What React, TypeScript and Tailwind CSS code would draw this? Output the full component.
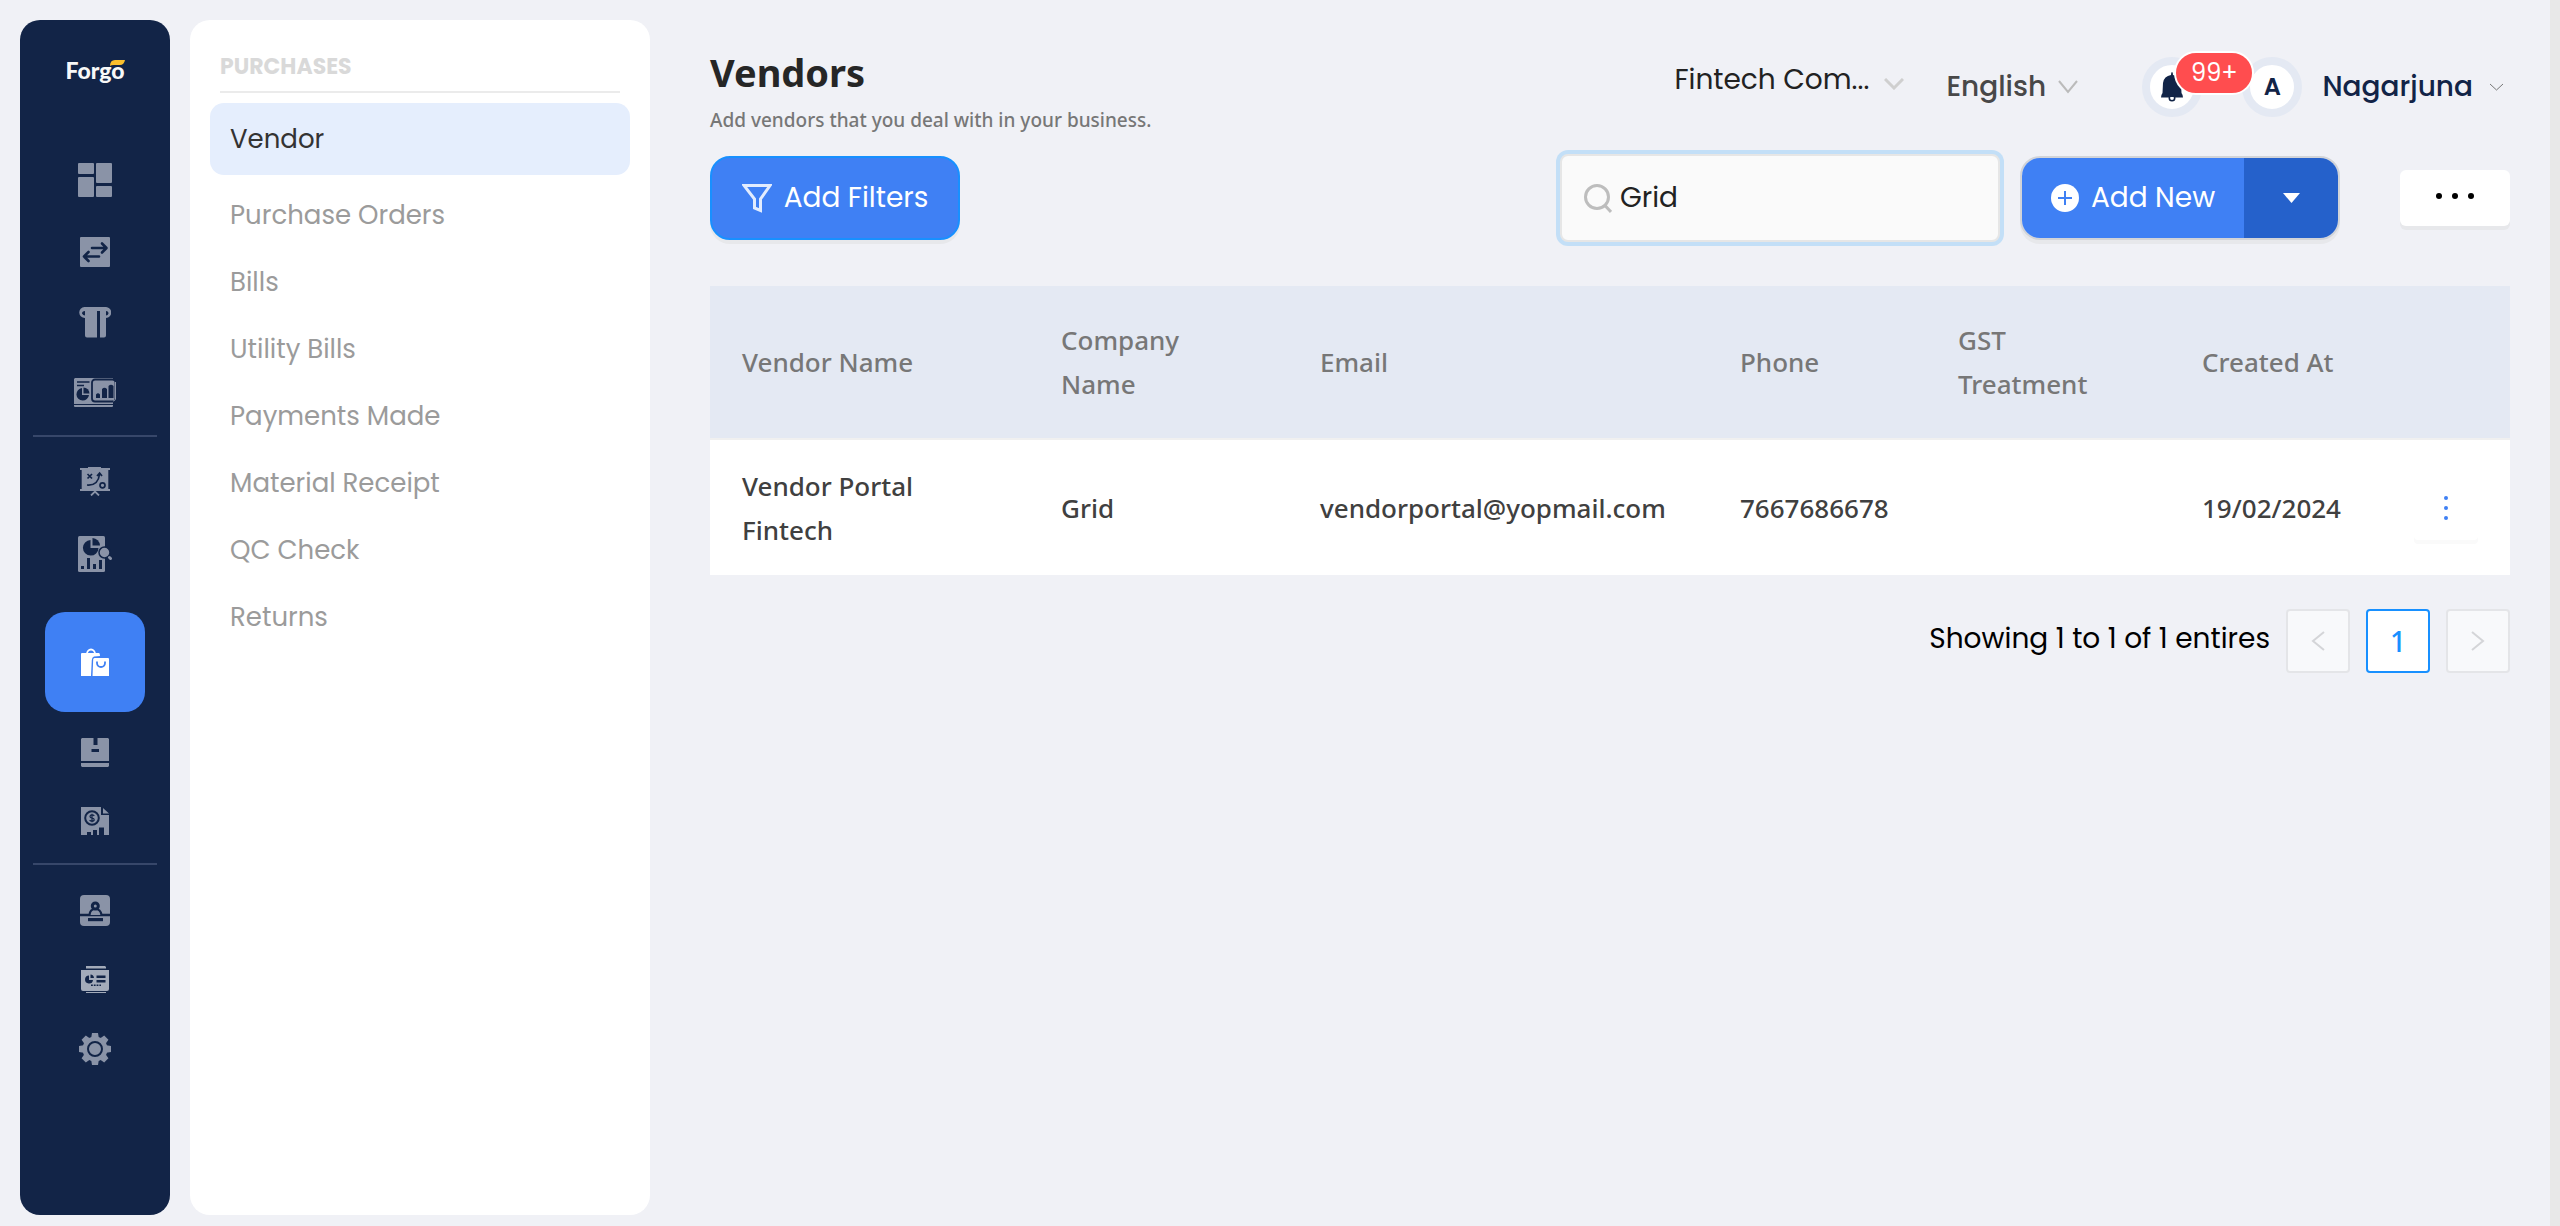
import type { ReactNode } from "react";

const NAVY = "#122447";

const icons = {
  dashboard: (
    <svg width="34" height="34" viewBox="0 0 34 34" fill="currentColor">
      <rect width="16" height="11" rx="1" />
      <rect y="14" width="16" height="20" rx="1" />
      <rect x="18" width="16" height="20" rx="1" />
      <rect x="18" y="23" width="16" height="11" rx="1" />
    </svg>
  ),
  transfer: (
    <svg width="30" height="30" viewBox="0 0 30 30">
      <rect width="30" height="30" rx="1" fill="currentColor" />
      <g fill="none" stroke={NAVY} strokeWidth="2.6" strokeLinecap="round" strokeLinejoin="round">
        <path d="M12 11H26M22 6.500l4.500 4.500-4.500 4.500" />
        <path d="M19 19.500H4M8.500 15L4 19.500 8.500 24" />
      </g>
    </svg>
  ),
  receipt: (
    <svg width="32" height="31" viewBox="0 0 32 31">
      <path
        d="M5.500 0H26.500A5.500 5.500 0 0 1 27 11V28.500Q27 30.500 25 30.500H8Q6 30.500 6 28.500V11A5.500 5.500 0 0 1 5.500 0Z"
        fill="currentColor"
      />
      <path d="M18 4h3v27h-3z" fill={NAVY} />
      <path d="M6 4Q3 4 3 6.500 4 8.500 6 8.500ZM27 4Q29.500 4 29.500 6.500 29 8.500 27 8.500Z" fill={NAVY} />
    </svg>
  ),
  analytics: (
    <svg width="42" height="29" viewBox="0 0 42 29">
      <path d="M1 0H39V26H0V1ZM0 27H39V28Q39 29 38 29H1Q0 29 0 28Z" fill="currentColor" />
      <path d="M3 4H15.500M3 7.500H10" stroke={NAVY} strokeWidth="1.400" />
      <path d="M8 10A6.300 6.300 0 1 0 15 17H8Z" fill={NAVY} />
      <path d="M9.500 9.500A6 6 0 0 1 15.500 15.500H9.500Z" fill={NAVY} />
      <rect x="18" y="1.500" width="23.500" height="22" rx="3" fill="currentColor" stroke={NAVY} strokeWidth="1.800" />
      <path d="M41.500 4V21Q41 23 39 23" stroke="currentColor" strokeWidth="1" fill="none" />
      <path
        d="M22 20V16.500Q24 14 26 16.500V20ZM28 20V11Q30.500 8.500 33 11V20ZM34.500 20V8Q37 5.500 39.500 8V20Z"
        fill={NAVY}
      />
    </svg>
  ),
  strategy: (
    <svg width="30" height="29" viewBox="0 0 30 29">
      <path d="M0 1H8V0H21V1H30V3H29V22H30V24H0V22H1V3H0Z" fill="currentColor" />
      <path d="M15 23V26M11 28.500l4-4 4 4" stroke="currentColor" strokeWidth="1.800" fill="none" />
      <g fill="none" stroke={NAVY} strokeWidth="1.700">
        <path d="M7.500 7l4.500 4.500M12 7l-4.500 4.500M7 18Q18 19 19.500 7.500M17 9l2.600-3L22 9" />
        <circle cx="22.500" cy="18.300" r="2.500" />
        <path d="M1.500 3V22M28.500 3V22" strokeWidth=".7" />
      </g>
    </svg>
  ),
  report: (
    <svg width="34" height="36" viewBox="0 0 34 36">
      <rect width="27" height="36" rx="1.500" fill="currentColor" />
      <g fill={NAVY}>
        <path d="M12.500 4A7.800 7.800 0 1 0 20.500 12H12.500Z" />
        <path d="M14.500 2A8 8 0 0 1 22 9.500H14.500Z" />
        <path d="M3 30h3v3H3zM9 22h3v11H9zM15 28h3v5h-3zM21 24h3v9h-3z" />
      </g>
      <circle cx="26.500" cy="16.500" r="5.500" fill="currentColor" stroke={NAVY} strokeWidth="1.500" />
      <path d="M31.500 21.500l1 1" stroke="currentColor" strokeWidth="3" strokeLinecap="round" />
    </svg>
  ),
  purchases: (
    <svg width="28" height="28" viewBox="0 0 28 28">
      <path d="M6 6A4 4.500 0 0 1 14 6" fill="none" stroke="currentColor" strokeWidth="1.800" />
      <path d="M1 5H18Q19 5 19 8L13 8.500Q11 9 10.800 12L10 28H0V6Q0 5 1 5Z" fill="currentColor" />
      <path d="M13.500 10H27Q28 10 28 11V28H11.500L12.200 11.500Q12.300 10 13.500 10Z" fill="currentColor" />
      <path d="M16 13.500V15A4 4 0 0 0 24 15V13.500" fill="none" stroke="#3f80f4" strokeWidth="1.800" />
    </svg>
  ),
  inventory: (
    <svg width="28" height="29" viewBox="0 0 28 29">
      <path d="M1 0H27L28 1V23H0V1ZM0 25H28V28L27 29H1L0 28Z" fill="currentColor" />
      <path d="M12.500 0h4v7h-4zM10.500 11h7.500v3h-7.500z" fill={NAVY} />
    </svg>
  ),
  finance: (
    <svg width="28" height="28" viewBox="0 0 28 28">
      <path d="M0 0H20V8H28V28H0ZM22 1L28 6.500H22Z" fill="currentColor" />
      <circle cx="11" cy="11" r="6.800" fill="none" stroke={NAVY} strokeWidth="2" />
      <path
        d="M13.300 8.800Q12.500 7.900 11 7.900 9 7.900 9 9.400 9 10.700 11 11 13.200 11.300 13.200 12.800 13.200 14.200 11 14.200 9.300 14.200 8.600 13.200M11 6.800V15.300"
        fill="none"
        stroke={NAVY}
        strokeWidth="1.200"
      />
      <path d="M6 28V25h4v3zM12 28V23h4v5zM18 28V20.500h5V28z" fill={NAVY} />
    </svg>
  ),
  contacts: (
    <svg width="30" height="31" viewBox="0 0 30 31">
      <rect width="30" height="31" rx="4" fill="currentColor" />
      <path d="M0 20h30" stroke={NAVY} strokeWidth="2.500" />
      <path d="M9.500 20Q10 14 15.300 14T21.500 20" fill="currentColor" stroke={NAVY} strokeWidth="2.200" />
      <circle cx="15.300" cy="11" r="3" fill="currentColor" stroke={NAVY} strokeWidth="3" />
      <path d="M8 23h15v3.200H8z" fill={NAVY} />
    </svg>
  ),
  cards: (
    <svg width="28" height="27" viewBox="0 0 28 27" className="text-[#a3abba]">
      <path d="M5 0H24L25 1V2.500H5ZM5 26H25V27H5ZM0 4H28V23Q28 25 26 25H2Q0 25 0 23Z" fill="currentColor" />
      <path d="M8 9.500A4 4 0 1 0 12 14H8ZM9.500 8.500A4 4 0 0 1 13 12H9.500ZM15.500 9.500h9v2.500h-9zM15.500 14h9v2.500h-9z" fill={NAVY} />
      <path d="M10 19.200H20" stroke={NAVY} strokeWidth="1.600" strokeDasharray="1.800 1" />
    </svg>
  ),
  settings: (
    <svg width="32" height="32" viewBox="0 0 32 32">
      <g fill="currentColor">
        <circle cx="16" cy="16" r="12.500" />
        <path d="M13 0h6l1 6h-8zM13 32h6l1-6h-8zM0 13v6l6 1v-8zM32 13v6l-6 1v-8z" />
        <path d="M13 0h6l1 6h-8zM13 32h6l1-6h-8zM0 13v6l6 1v-8zM32 13v6l-6 1v-8z" transform="rotate(45 16 16)" />
      </g>
      <circle cx="16" cy="16" r="7" fill="none" stroke={NAVY} strokeWidth="2" />
    </svg>
  ),
};

function RailButton({ label, children }: { label: string; children: ReactNode }) {
  return (
    <button type="button" aria-label={label} className="text-[#8a93a7]">
      {children}
    </button>
  );
}

function Chevron({ className, width, height, stroke = 2 }: { className: string; width: number; height: number; stroke?: number }) {
  return (
    <svg className={className} width={width} height={height} viewBox={`0 0 ${width} ${height}`} fill="none" stroke="currentColor" strokeWidth={stroke} aria-hidden="true">
      <path d={`M1 1L${width / 2} ${height - 2}L${width - 1} 1`} />
    </svg>
  );
}

function Rail() {
  return (
    <aside className="flex w-[150px] shrink-0 flex-col items-center rounded-[20px] bg-[#122447]">
      <div className="relative mt-8 font-['Lato'] text-[23px] leading-9 font-black text-[#f8f8f8]">
        Forgo
        <svg className="absolute top-2 right-0" width="15" height="6" viewBox="0 0 15 6" aria-hidden="true">
          <path d="M0 6Q0 0 5 0H15Q14 5 10 5H4Q1 5 0 6Z" fill="#fbbf2c" />
        </svg>
      </div>
      <nav aria-label="Modules" className="mt-[75px] flex w-full flex-col items-center [&_svg]:block">
        <div className="flex flex-col items-center gap-10">
          <RailButton label="Dashboard">{icons.dashboard}</RailButton>
          <RailButton label="Transactions">{icons.transfer}</RailButton>
          <RailButton label="Receipts">{icons.receipt}</RailButton>
          <RailButton label="Analytics">{icons.analytics}</RailButton>
        </div>
        <hr className="mt-7 mb-[30px] w-[124px] border-t-2 border-[#37476a]" />
        <div className="flex flex-col items-center gap-10">
          <RailButton label="Strategy">{icons.strategy}</RailButton>
          <RailButton label="Reports">{icons.report}</RailButton>
          <button type="button" aria-label="Purchases" className="-mb-3.5 flex size-[100px] items-center justify-center rounded-[20px] bg-[#3f80f4] text-white">
            {icons.purchases}
          </button>
          <RailButton label="Inventory">{icons.inventory}</RailButton>
          <RailButton label="Finance">{icons.finance}</RailButton>
        </div>
        <hr className="mt-7 mb-[30px] w-[124px] border-t-2 border-[#37476a]" />
        <div className="flex flex-col items-center gap-10">
          <RailButton label="Contacts">{icons.contacts}</RailButton>
          <RailButton label="Cards">{icons.cards}</RailButton>
          <RailButton label="Settings">{icons.settings}</RailButton>
        </div>
      </nav>
    </aside>
  );
}

const sections = ["Purchase Orders", "Bills", "Utility Bills", "Payments Made", "Material Receipt", "QC Check", "Returns"];

function SectionMenu() {
  return (
    <nav aria-label="Purchases" className="w-[460px] shrink-0 rounded-[20px] bg-white px-5 text-[26px]">
      <h2 className="mx-2.5 border-b-2 border-[#ebebeb] pt-8 pb-2.5 text-[22px] leading-[29px] font-bold text-[#d9d9d9]">PURCHASES</h2>
      <a href="#vendor" aria-current="page" className="mt-2.5 flex h-[72px] items-center rounded-[14px] bg-[#e5eefd] px-5 text-[#333]">
        Vendor
      </a>
      <ul className="mt-[7px]">
        {sections.map((name) => (
          <li key={name}>
            <a href="#section" className="flex h-[67px] items-center px-5 text-[#9b9b9b]">
              {name}
            </a>
          </li>
        ))}
      </ul>
    </nav>
  );
}

function Header() {
  return (
    <header className="flex h-[134px] items-start justify-between">
      <div className="pt-[26px] font-['Segoe_UI','Noto_Sans',sans-serif]">
        <h1 className="text-[38px] leading-[52px] font-bold text-[#262626]">Vendors</h1>
        <p className="mt-1.5 text-[19px] leading-8 font-medium text-[#777]">Add vendors that you deal with in your business.</p>
      </div>
      <div className="mt-[37px] flex h-[60px] items-center text-[28px]">
        <div className="flex items-center pb-3.5">
          <select aria-label="Company" className="w-[200px] appearance-none text-[#222]">
            <option>Fintech Com...</option>
          </select>
          <Chevron className="mt-2 ml-2.5 text-[#cfcfcf]" width={20} height={12} stroke={3} />
        </div>
        <div className="ml-[42px] flex items-center">
          <select aria-label="Language" className="w-[104px] appearance-none font-medium text-[#484848]">
            <option>English</option>
          </select>
          <Chevron className="ml-2 text-[#bbb]" width={20} height={14} />
        </div>
        <button type="button" aria-label="Notifications" className="relative ml-16 flex size-[60px] items-center justify-center rounded-full border-8 border-[#e4e9f3] bg-white">
          <svg width="22" height="30" viewBox="0 0 22 30" fill={NAVY} aria-hidden="true">
            <path d="M11 0Q12 0 12 3 19 4 20 11L20.500 21Q22 23 22 25.500H0Q0 23 1.500 21L2 11Q3 4 10 3 10 0 11 0Z" />
            <circle cx="11" cy="26" r="2.700" fill="white" stroke={NAVY} strokeWidth="1.600" />
            <path d="M2 21.500H20V25H2Z" />
          </svg>
          <span className="absolute -top-3.5 left-6 z-10 flex h-11 w-20 items-center justify-center rounded-full border-2 border-white bg-[#ff4d4f] text-[24px] font-normal text-white">99+</span>
        </button>
        <button type="button" className="ml-10 flex items-center font-medium text-[#122447]">
          <span className="flex size-[60px] items-center justify-center rounded-full border-8 border-[#e4e9f3] bg-white text-[24px] font-semibold">A</span>
          <span className="ml-5">Nagarjuna</span>
          <Chevron className="ml-4 text-[#777]" width={15} height={9} stroke={1} />
        </button>
        <span className="w-1.5" />
      </div>
    </header>
  );
}

function Toolbar() {
  return (
    <div className="flex h-[88px] items-center text-[28px]">
      <button type="button" className="flex h-[84px] w-[250px] items-center justify-center gap-3 rounded-[20px] border-2 border-[#1890ff] bg-[#3f80f4] text-white shadow-[0_4px_0_#e7e8eb]">
        <svg width="30" height="29" viewBox="0 0 30 29" fill="none" stroke="currentColor" strokeOpacity=".85" strokeWidth="3" aria-hidden="true">
          <path d="M2 1.500H28L18.500 15V26.500L12.500 24V15Z" />
        </svg>
        Add Filters
      </button>
      <label className="ml-auto flex h-[88px] w-[440px] items-center rounded-lg border-2 border-[#e6e6e6] bg-[#fafafa] px-[22px] shadow-[0_0_0_4px_#c3dff7]">
        <svg width="28" height="29" viewBox="0 0 28 29" fill="none" stroke="#bdbdbd" strokeWidth="3" aria-hidden="true">
          <circle cx="13" cy="13" r="11.500" />
          <path d="M21 21.500L27 28" />
        </svg>
        <input type="text" aria-label="Search" defaultValue="Grid" className="ml-2 min-w-0 flex-1 bg-transparent text-[#222] outline-none" />
      </label>
      <div className="ml-5 flex h-[84px] overflow-hidden rounded-[20px] border-2 border-[#d2d4d8] text-white shadow-[0_4px_0_#e7e8eb]">
        <button type="button" className="flex w-[222px] items-center justify-center gap-3 bg-[#3f80f4]">
          <svg width="28" height="28" viewBox="0 0 28 28" aria-hidden="true">
            <circle cx="14" cy="14" r="14" fill="white" />
            <path d="M14 7V21M7 14H21" stroke="#3f80f4" strokeWidth="2" />
          </svg>
          Add New
        </button>
        <button type="button" aria-label="More ways to add" className="flex w-[94px] items-center justify-center bg-[#2561cb]">
          <svg width="17" height="10" viewBox="0 0 17 10" fill="white" aria-hidden="true">
            <path d="M0 0H17L8.500 10Z" />
          </svg>
        </button>
      </div>
      <button type="button" aria-label="More options" className="ml-[60px] flex h-14 w-[110px] items-center justify-center rounded-md bg-white pb-1 shadow-[0_4px_0_#e7e8eb]">
        <svg width="40" height="8" viewBox="0 0 40 8" aria-hidden="true">
          <circle cx="4" cy="4" r="3" />
          <circle cx="20" cy="4" r="3" />
          <circle cx="36" cy="4" r="3" />
        </svg>
      </button>
    </div>
  );
}

function VendorTable() {
  return (
    <table className="mt-11 w-full table-fixed text-left font-['Segoe_UI','Noto_Sans',sans-serif] text-[26px] leading-[44px] font-medium">
      <colgroup>
        <col className="w-[319px]" />
        <col className="w-[259px]" />
        <col className="w-[420px]" />
        <col className="w-[218px]" />
        <col className="w-[244px]" />
        <col className="w-[212px]" />
        <col className="w-[128px]" />
      </colgroup>
      <thead>
        <tr className="h-[153px] border-b-2 border-[#f0f0f0] bg-[#e4e9f3] text-[#777] [&>th]:px-8 [&>th]:font-medium">
          <th scope="col">Vendor Name</th>
          <th scope="col">Company Name</th>
          <th scope="col">Email</th>
          <th scope="col">Phone</th>
          <th scope="col">GST<br />Treatment</th>
          <th scope="col" className="whitespace-nowrap">Created At</th>
          <th scope="col" aria-label="Actions" />
        </tr>
      </thead>
      <tbody>
        <tr className="h-[136px] bg-white text-[#404040] [&>td]:px-8">
          <td>Vendor Portal Fintech</td>
          <td>Grid</td>
          <td>vendorportal@yopmail.com</td>
          <td>7667686678</td>
          <td />
          <td>19/02/2024</td>
          <td>
            <button type="button" aria-label="Row actions" className="flex h-16 w-full items-center justify-center rounded-sm bg-white shadow-[0_4px_0_#fafafa]">
              <svg width="4" height="24" viewBox="0 0 4 24" fill="#3f80f4" aria-hidden="true">
                <circle cx="2" cy="2" r="2" />
                <circle cx="2" cy="12" r="2" />
                <circle cx="2" cy="22" r="2" />
              </svg>
            </button>
          </td>
        </tr>
      </tbody>
    </table>
  );
}

function Pagination() {
  return (
    <nav aria-label="Pagination" className="mt-[34px] flex items-center justify-end gap-4 text-[28px]">
      <p className="pb-1 text-black">Showing 1 to 1 of 1 entires</p>
      <button type="button" aria-label="Previous page" disabled className="flex size-16 items-center justify-center rounded border-2 border-[#e4e5e8] bg-[#f8f9fb] text-[#d4d5d8]">
        <svg width="14" height="20" viewBox="0 0 14 20" fill="none" stroke="currentColor" strokeWidth="2" aria-hidden="true">
          <path d="M13 1L2 10L13 19" />
        </svg>
      </button>
      <button type="button" aria-current="page" className="flex size-16 items-center justify-center rounded border-2 border-[#1890ff] bg-white font-['Segoe_UI','Noto_Sans',sans-serif] font-medium text-[#1890ff]">
        1
      </button>
      <button type="button" aria-label="Next page" disabled className="flex size-16 items-center justify-center rounded border-2 border-[#e4e5e8] bg-[#f8f9fb] text-[#d4d5d8]">
        <svg width="14" height="20" viewBox="0 0 14 20" fill="none" stroke="currentColor" strokeWidth="2" aria-hidden="true">
          <path d="M1 1L12 10L1 19" />
        </svg>
      </button>
    </nav>
  );
}

export default function App() {
  return (
    <div className="flex min-h-screen bg-[#f0f1f6] font-['Poppins','Inter',sans-serif]">
      <div className="flex min-w-0 flex-1 gap-5 pt-5 pb-[11px] pl-5">
        <Rail />
        <SectionMenu />
        <main className="min-w-0 flex-1 pr-10 pl-10">
          <Header />
          <Toolbar />
          <VendorTable />
          <Pagination />
        </main>
      </div>
      <div className="w-2.5 shrink-0 bg-[#e8e8e8]" />
    </div>
  );
}
